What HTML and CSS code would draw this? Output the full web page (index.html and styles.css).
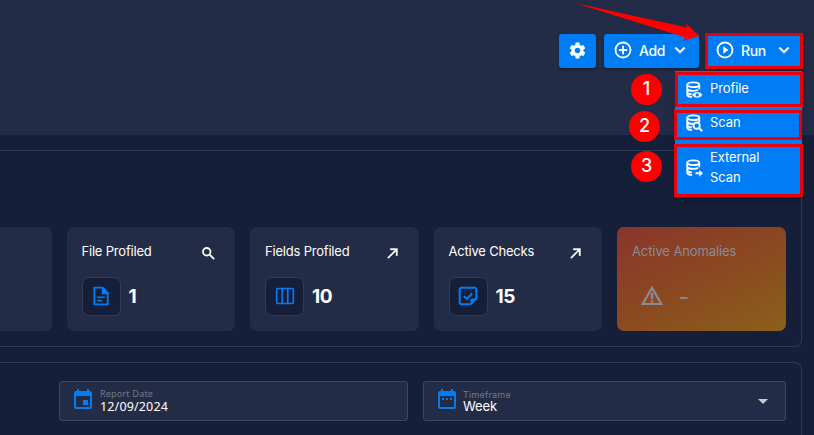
FILE: index.html
```html
<!DOCTYPE html>
<html lang="en">
<head>
<meta charset="utf-8">
<title>Datastore overview</title>
<link rel="stylesheet" href="styles.css">
</head>
<body>
<svg class="defs" aria-hidden="true">
  <symbol id="database" viewBox="0 0 24 24"><g fill="none" stroke="currentColor" stroke-width="2.500"><ellipse cx="11" cy="5" rx="8" ry="3.200"/><path d="M3 5v13c0 1.800 2.700 3.200 6.500 3.200M3 10c0 1.700 3.400 3.200 8 3.200 2.800 0 5-.5 6.300-1.400M3 14.500c0 1.500 2.500 2.900 6 3.100M19 5v6"/></g></symbol>
  <symbol id="chevron" viewBox="0 0 24 24"><path fill="currentColor" stroke="currentColor" stroke-width=".8" d="M7.410 8.580 12 13.170l4.590-4.590L18 10l-6 6-6-6z"/></symbol>
  <symbol id="arrow" viewBox="0 0 24 24"><path fill="currentColor" d="M5 17.590 15.590 7H9V5h10v10h-2V8.410L6.410 19z" stroke="currentColor" stroke-width=".6"/></symbol>
</svg>
<header class="header">
  <div class="toolbar">
    <button class="btn gear" aria-label="Settings"><svg viewBox="0 0 24 24"><path fill="currentColor" d="M12 15.500A3.500 3.500 0 1 1 12 8.500a3.500 3.500 0 0 1 0 7m7.430-2.530c.04-.32.07-.64.07-.97s-.03-.66-.07-1l2.110-1.630c.19-.15.24-.42.12-.64l-2-3.460c-.12-.22-.39-.31-.61-.22l-2.490 1c-.52-.39-1.060-.73-1.690-.98l-.37-2.650A.506.506 0 0 0 14 2h-4c-.25 0-.46.18-.5.420l-.37 2.650c-.63.25-1.170.59-1.690.98l-2.490-1c-.22-.09-.49 0-.61.220l-2 3.460c-.13.22-.07.49.12.640L4.570 11c-.04.34-.07.67-.07 1s.03.65.07.970l-2.110 1.660c-.19.15-.25.42-.12.640l2 3.460c.12.22.39.300.61.220l2.490-1.010c.52.400 1.060.740 1.690.990l.37 2.650c.04.240.25.420.5.420h4c.25 0 .46-.18.500-.42l.37-2.650c.63-.26 1.170-.59 1.690-.99l2.490 1.010c.22.080.49 0 .61-.22l2-3.460c.12-.22.070-.49-.12-.64z"/></svg></button>
    <button class="btn add"><svg viewBox="0 0 24 24" fill="none" stroke="currentColor" stroke-width="2.200"><circle cx="12" cy="12" r="9"/><path d="M12 7v10M7 12h10"/></svg><span>Add</span><svg class="chev"><use href="#chevron"/></svg></button>
    <div class="run-wrap">
      <button class="btn run"><svg viewBox="0 0 24 24" fill="none" stroke="currentColor" stroke-width="2.200"><circle cx="12" cy="12" r="9"/><path d="m10 7.500 6 4.500-6 4.500z" fill="currentColor" stroke="none"/></svg><span>Run</span><svg class="chev"><use href="#chevron"/></svg></button>
      <div class="menu">
        <div class="item profile"><b class="step">1</b><svg viewBox="0 0 24 24"><use href="#database"/><path d="M9 18.500C12 13 20.500 13 23.500 18.500c-3 5.500-11.500 5.500-14.500 0z" fill="currentColor" stroke="#007df5"/><circle cx="16.300" cy="18.500" r="2.200" fill="#007df5"/></svg><span>Profile</span></div>
        <div class="item scan"><b class="step">2</b><svg viewBox="0 0 24 24"><use href="#database"/><g fill="#007df5" stroke="currentColor" stroke-width="2.500"><circle cx="15.500" cy="15.500" r="4.200"/><path d="m18.500 18.500 4.500 4.500"/></g></svg><span>Scan</span></div>
        <div class="item external"><b class="step">3</b><svg viewBox="0 0 24 24"><use href="#database"/><path d="M14 17.800h5V14.500l5 4.500-5 4.500v-3.300h-5z" fill="currentColor"/></svg><span>External<br>Scan</span></div>
      </div>
    </div>
  </div>
  <svg class="pointer" viewBox="0 0 128 40"><path d="M0 0 112 24.500 111 20.500 124.500 33 107 38l3.500-3.500z" fill="#f00"/></svg>
</header>
<main>
  <section class="panel metrics">
    <article class="card"></article>
    <article class="card">
      <div class="head"><h2>File Profiled</h2><svg viewBox="0 0 24 24" fill="none" stroke="currentColor" stroke-width="2.600"><circle cx="9.500" cy="9.500" r="5.300"/><path d="m13.500 13.500 6.500 6.500"/></svg></div>
      <div class="value"><i class="tile"><svg viewBox="0 0 24 24"><path fill="none" stroke="currentColor" stroke-width="2.200" stroke-linejoin="round" d="M14 2H4v20h16V8z"/><path d="M13 2h1.500L21 8.500V10h-8z" fill="currentColor"/><path d="M7.500 13.500h9M7.500 17.500h6" stroke="currentColor" stroke-width="1.900"/></svg></i><strong>1</strong></div>
    </article>
    <article class="card">
      <div class="head"><h2>Fields Profiled</h2><svg><use href="#arrow"/></svg></div>
      <div class="value"><i class="tile"><svg viewBox="0 0 24 24" fill="none" stroke="currentColor" stroke-width="2"><rect x="2" y="3" width="20" height="18" rx="1.500"/><path d="M8.700 3v18M15.300 3v18"/></svg></i><strong>10</strong></div>
    </article>
    <article class="card">
      <div class="head"><h2>Active Checks</h2><svg><use href="#arrow"/></svg></div>
      <div class="value"><i class="tile"><svg viewBox="0 0 24 24" fill="none" stroke="currentColor" stroke-width="2.400"><path d="M15 22H4a2 2 0 0 1-2-2V4a2 2 0 0 1 2-2h16a2 2 0 0 1 2 2v11l-7 7M7 12l3.500 3.500L17 9"/><path d="M15 22v-5a2 2 0 0 1 2-2h6z" fill="currentColor" stroke="none"/></svg></i><strong>15</strong></div>
    </article>
    <article class="card anomalies">
      <div class="head"><h2>Active Anomalies</h2></div>
      <div class="value"><i class="tile"><svg viewBox="0 0 24 24"><path fill="none" stroke="currentColor" stroke-width="2.200" d="M12 4 2.700 20h18.600z"/><path d="M12 9v6M12 16.200v2.300" stroke="currentColor" stroke-width="2.400"/></svg></i><strong>–</strong></div>
    </article>
  </section>
  <section class="panel filters">
    <div class="field date"><svg viewBox="0 0 24 24"><path fill="currentColor" d="M19 19H5V8h14m-3-7v2H8V1H6v2H5a2 2 0 0 0-2 2v14a2 2 0 0 0 2 2h14a2 2 0 0 0 2-2V5a2 2 0 0 0-2-2h-1V1m-1 11h-5v5h5z"/></svg><div class="text"><label>Report Date</label><span>12/09/2024</span></div></div>
    <div class="field time"><svg viewBox="0 0 24 24"><path fill="currentColor" d="M19 19H5V8h14m-3-7v2H8V1H6v2H5a2 2 0 0 0-2 2v14a2 2 0 0 0 2 2h14a2 2 0 0 0 2-2V5a2 2 0 0 0-2-2h-1V1M7 10h2v2H7zm4 0h2v2h-2zm4 0h2v2h-2z"/></svg><div class="text"><label>Timeframe</label><span>Week</span></div><svg class="caret" viewBox="0 0 10 5"><path d="M0 0h10L5 5z" fill="currentColor"/></svg></div>
  </section>
</main>
</body>
</html>
```

FILE: styles.css
```css
* { box-sizing: border-box; }
body {
  margin: 0;
  width: 814px;
  height: 435px;
  overflow: hidden;
  background: #151f39;
  color: #fff;
  font-family: Inter, "Liberation Sans", sans-serif;
}
svg { display: block; flex: none; }
.defs { display: none; }
.header { position: relative; height: 135px; padding: 33px 11px 0 0; background: #232c46; }
.toolbar { display: flex; justify-content: flex-end; align-items: flex-start; }
.btn {
  display: flex;
  align-items: center;
  height: 34px;
  margin: 1px 0 0;
  padding: 0 9px 2px;
  border: 0;
  border-radius: 3px;
  background: #007df5;
  color: #fff;
  font: 500 14px Inter, sans-serif;
  letter-spacing: -.4px;
  box-shadow: 0 2px 3px rgba(0, 0, 0, .25);
}
.btn svg { width: 20px; height: 20px; }
.btn span { margin-left: 6px; }
.btn .chev { width: 20px; height: 20px; margin-left: auto; }
.gear { width: 37px; margin-right: 8px; }
.gear svg { width: 19px; height: 19px; }
.add { width: 95px; margin-right: 6px; }
.run-wrap { position: relative; z-index: 2; }
.run { width: 98px; height: 36px; margin: 0; padding: 0 6px 2px 7px; border: 3px solid #e7000b; border-radius: 0; }
.menu {
  position: absolute;
  top: 38px;
  right: 0;
  width: 129px;
  height: 126px;
  background: linear-gradient(#007df5, #007df5) 1px 0 / 127px 100% no-repeat;
  box-shadow: 0 5px 8px rgba(0, 0, 0, .15);
}
.item {
  position: relative;
  display: flex;
  align-items: center;
  border: 3px solid #e7000b;
  font-size: 13px;
  line-height: 20px;
  letter-spacing: -.1px;
}
.item svg { width: 18px; height: 18px; margin-left: 7px; }
.item span { margin-left: 7px; }
.profile { height: 35px; margin: 1px 0 3px 1px; }
.profile span { padding-bottom: 4px; }
.scan { height: 30px; margin: 0 1px 4px 0; padding-bottom: 5px; }
.scan span { padding-bottom: 1px; }
.scan svg, .external svg { margin-left: 8px; }
.external { height: 53px; padding-bottom: 7px; }
.external svg { position: relative; top: 1px; }
.step {
  position: absolute;
  left: -47px;
  top: -1px;
  width: 31px;
  height: 31px;
  border-radius: 50%;
  background: #f00;
  font: 500 18px/30px Inter, sans-serif;
  text-align: center;
}
.scan .step { left: -48px; top: -2px; }
.external .step { left: -46px; top: 4px; }
.pointer { position: absolute; left: 575px; top: 3px; width: 128px; height: 40px; z-index: 3; }
.panel { width: 802px; border: 1px solid #313b54; border-left: 0; }
.metrics {
  display: flex;
  justify-content: flex-end;
  gap: 15px;
  height: 197px;
  margin-top: 15px;
  padding: 76px 15.500px 15px 0;
  border-radius: 0 0 7px 0;
}
.card {
  flex: none;
  width: 168.500px;
  height: 104px;
  padding: 15px;
  border-radius: 7px;
  background: #232c46;
}
.head { display: flex; justify-content: space-between; height: 35px; }
.head h2 { margin: 0; font-size: 13px; font-weight: 400; line-height: 19px; letter-spacing: -.2px; white-space: nowrap; }
.head svg { width: 17px; height: 17px; margin: 3px 3px 0 0; }
.value { display: flex; align-items: center; }
.tile { display: grid; place-items: center; width: 39px; height: 39px; border: 1px solid #313b54; border-radius: 7px; background: #151f39; color: #007df5; }
.tile svg { width: 20px; height: 20px; margin-top: -1px; }
.value strong { margin-left: 8px; font-size: 19px; line-height: 28px; letter-spacing: -.5px; }
.anomalies { background: linear-gradient(155deg, #8a352b, #8a4b20 55%, #8b601a); color: #898b99; }
.anomalies .head h2 { letter-spacing: -.1px; }
.anomalies .tile { border: 0; background: none; color: inherit; }
.anomalies .tile svg { width: 24px; height: 24px; margin-top: -2px; }
.anomalies strong { margin-left: 9px; font-size: 15px; }
.filters { display: flex; gap: 15px; height: 90px; margin-top: 15px; padding: 18px 15px 0 59px; border-bottom: 0; border-radius: 0 7px 0 0; }
.field { display: flex; align-items: center; height: 40px; padding: 0 17px 0 11px; border: 1px solid #3f485e; border-radius: 3px; background: #232c46; }
.field > svg:first-child { width: 24px; height: 24px; color: #007df5; margin-top: -3px; }
.date { width: 349px; }
.time { width: 363px; }
.date { font-family: "Noto Sans", sans-serif; }
.text { display: flex; flex-direction: column; margin-left: 5px; }
.text label { height: 11px; color: #747983; font-size: 9px; line-height: 9px; letter-spacing: .2px; }
.text span { height: 14px; font-size: 12.500px; line-height: 14px; letter-spacing: .15px; }
.time .text { margin-left: 4px; }
.time .text label { line-height: 11px; }
.time .text span { font-size: 13px; line-height: 12px; letter-spacing: -.1px; }
.field .caret { width: 10px; height: 5px; margin-left: auto; color: #c8cad1; }
```
